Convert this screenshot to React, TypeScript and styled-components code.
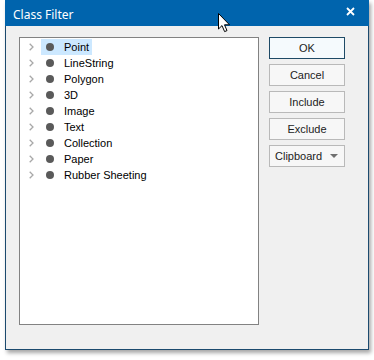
import React from 'react';
import styled, { createGlobalStyle } from 'styled-components';

const GlobalStyle = createGlobalStyle`
	html, body {
		margin: 0;
		padding: 0;
		background: #ffffff;
	}
	body {
		font-family: 'Liberation Sans', Arial, sans-serif;
	}
`;

const classes = [
	'Point',
	'LineString',
	'Polygon',
	'3D',
	'Image',
	'Text',
	'Collection',
	'Paper',
	'Rubber Sheeting',
];

const Chevron = () => (
	<svg width='5' height='8' viewBox='0 0 5 8'>
		<path d='M0.7 0.7 L4 4 L0.7 7.3' fill='none' stroke='#a8a8a8' strokeWidth='1.3' />
	</svg>
);

const Cursor = () => (
	<svg width='13' height='20' viewBox='0 0 13 20'>
		<path
			d='M0.5 0.5 L0.5 16 L4 12.6 L6.6 18.6 L9 17.6 L6.5 11.8 L11.5 11.8 Z'
			fill='#ffffff'
			stroke='#000000'
			strokeWidth='1'
			strokeLinejoin='miter'
		/>
	</svg>
);

const App = () => {
	return (
		<Page>
			<GlobalStyle />
			<Dialog>
				<TitleBar>
					<Title>Class Filter</Title>
					<CloseButton>
						<svg width='9' height='9' viewBox='0 0 9 9'>
							<path d='M1 1 L8 8 M8 1 L1 8' stroke='#ffffff' strokeWidth='1.8' />
						</svg>
					</CloseButton>
					<CursorSpot>
						<Cursor />
					</CursorSpot>
				</TitleBar>
				<Body>
					<TreePanel>
						{classes.map((name, i) => (
							<TreeRow key={name}>
								<Chevron />
								<Label $selected={i === 0}>
									<Bullet />
									{name}
								</Label>
							</TreeRow>
						))}
					</TreePanel>
					<ButtonColumn>
						<DialogButton $primary>OK</DialogButton>
						<DialogButton>Cancel</DialogButton>
						<DialogButton>Include</DialogButton>
						<DialogButton>Exclude</DialogButton>
						<DialogButton $dropdown>
							Clipboard
							<Caret />
						</DialogButton>
					</ButtonColumn>
				</Body>
			</Dialog>
		</Page>
	);
};

export default App;

const Page = styled.div({
	width: '374px',
	height: '360px',
	paddingLeft: '5px',
	boxSizing: 'border-box',
	overflow: 'hidden',
});

const Dialog = styled.div({
	width: '364px',
	height: '350px',
	boxSizing: 'border-box',
	background: '#f0f0f0',
	border: '1px solid #1c4a6e',
	borderTop: 'none',
	boxShadow: '2px 3px 4px rgba(0,0,0,0.35)',
	display: 'flex',
	flexDirection: 'column',
});

const TitleBar = styled.div({
	position: 'relative',
	height: '26px',
	margin: '0 -1px',
	background: '#0064ad',
	display: 'flex',
	alignItems: 'center',
	justifyContent: 'space-between',
	padding: '0 14px 0 8px',
	flexShrink: 0,
});

const Title = styled.span({
	color: '#ffffff',
	fontFamily: "'Noto Sans', 'Open Sans', sans-serif",
	fontSize: '12px',
	marginTop: '2px',
});

const CloseButton = styled.span({
	display: 'flex',
	marginTop: '-3px',
});

const CursorSpot = styled.div({
	position: 'absolute',
	left: '213px',
	top: '13px',
	zIndex: 2,
	lineHeight: 0,
});

const Body = styled.div({
	flex: 1,
	display: 'flex',
	padding: '11px 23px 24px 13px',
	gap: '10px',
});

const TreePanel = styled.div({
	width: '240px',
	height: '288px',
	boxSizing: 'border-box',
	background: '#ffffff',
	border: '1px solid #828282',
	padding: '1px 0 0 0',
	display: 'flex',
	flexDirection: 'column',
});

const TreeRow = styled.div({
	height: '16px',
	display: 'flex',
	alignItems: 'center',
	paddingLeft: '9px',
	gap: '7px',
});

const Label = styled.span<{ $selected?: boolean }>(({ $selected }) => ({
	height: '16px',
	display: 'flex',
	alignItems: 'center',
	gap: '10px',
	padding: '0 3px 0 5px',
	fontSize: '11px',
	color: '#000000',
	background: $selected ? '#cce8ff' : 'transparent',
	whiteSpace: 'nowrap',
}));

const Bullet = styled.span({
	width: '8px',
	height: '8px',
	borderRadius: '50%',
	background: '#5a5a5a',
	flexShrink: 0,
});

const ButtonColumn = styled.div({
	display: 'flex',
	flexDirection: 'column',
	gap: '5px',
});

const DialogButton = styled.div<{ $primary?: boolean; $dropdown?: boolean }>(
	({ $primary, $dropdown }) => ({
		width: '76px',
		height: '22px',
		boxSizing: 'border-box',
		display: 'flex',
		alignItems: 'center',
		justifyContent: $dropdown ? 'space-between' : 'center',
		padding: $dropdown ? '0 6px 0 5px' : '0',
		fontSize: '11px',
		color: '#222222',
		background: $primary ? '#f5fafd' : '#f7f7f7',
		border: $primary ? '1px solid #1e4a66' : '1px solid #b9b9b9',
	})
);

const Caret = styled.span({
	width: 0,
	height: 0,
	borderLeft: '4px solid transparent',
	borderRight: '4px solid transparent',
	borderTop: '4px solid #707070',
});
